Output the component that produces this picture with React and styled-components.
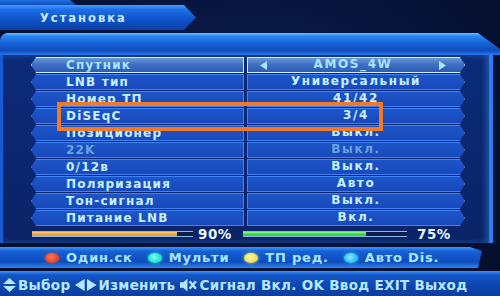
import styled, { createGlobalStyle } from 'styled-components';

const GlobalStyle = createGlobalStyle`
  html, body {
    margin: 0;
    padding: 0;
    background: #06112e;
  }
  * {
    box-sizing: border-box;
  }
`;

const rows = [
  { label: 'Спутник', value: 'AMOS_4W', selected: true },
  { label: 'LNB тип', value: 'Универсальный' },
  { label: 'Номер ТП', value: '41/42' },
  { label: 'DiSEqC', value: '3/4' },
  { label: 'Позиционер', value: 'Выкл.' },
  { label: '22K', value: 'Выкл.', dim: true },
  { label: '0/12в', value: 'Выкл.' },
  { label: 'Поляризация', value: 'Авто' },
  { label: 'Тон-сигнал', value: 'Выкл.' },
  { label: 'Питание LNB', value: 'Вкл.' },
];

const legend = [
  { color: '#e5482e', glow: '#ff7a50', text: 'Один.ск' },
  { color: '#22e2cf', glow: '#7affee', text: 'Мульти' },
  { color: '#e6e05a', glow: '#fff7a0', text: 'ТП ред.' },
  { color: '#2ec4f4', glow: '#8ae6ff', text: 'Авто Dis.' },
];

const Arrow = ({ dir, size = 9 }) => (
  <svg width={size * 0.8} height={size} viewBox="0 0 8 10">
    {dir === 'left' ? <polygon points="8,0 8,10 0,5" fill="currentColor" /> : <polygon points="0,0 0,10 8,5" fill="currentColor" />}
  </svg>
);

const UpDown = () => (
  <svg width="13" height="14" viewBox="0 0 12 13">
    <polygon points="6,0 12,5.5 0,5.5" fill="currentColor" />
    <polygon points="0,7.5 12,7.5 6,13" fill="currentColor" />
  </svg>
);

const Mute = () => (
  <svg width="17" height="14" viewBox="0 0 16 13">
    <polygon points="0,4 3,4 7,0.5 7,12.5 3,9 0,9" fill="currentColor" />
    <path d="M9 3 L15 10 M15 3 L9 10" stroke="currentColor" strokeWidth="2.2" />
  </svg>
);

export default function App() {
  return (
    <Screen>
      <GlobalStyle />
      <TitleArea>
        <TopStripe />
        <TitleTab>Установка</TitleTab>
      </TitleArea>
      <HeaderBand />
      <Body>
        <RowList>
          {rows.map((r) => (
            <Row key={r.label}>
              <LabelCell $selected={r.selected} $dim={r.dim}>{r.label}</LabelCell>
              <ValueCell $selected={r.selected} $dim={r.dim}>
                {r.selected && <Arrow dir="left" />}
                <ValueText>{r.value}</ValueText>
                {r.selected && <Arrow dir="right" />}
              </ValueCell>
            </Row>
          ))}
        </RowList>
        <MeterRow>
          <Meter $w={161}>
            <MeterFill $color="#f0a235" $edge="#ffd080" style={{ width: '90%' }} />
          </Meter>
          <Percent $w={50}>90%</Percent>
          <Meter $w={164}>
            <MeterFill $color="#34d64a" $edge="#9cff9c" style={{ width: '75%' }} />
          </Meter>
          <Percent>75%</Percent>
        </MeterRow>
      </Body>
      <LegendBand>
        {legend.map((l) => (
          <LegendItem key={l.text}>
            <Dot $color={l.color} $glow={l.glow} />
            {l.text}
          </LegendItem>
        ))}
      </LegendBand>
      <HelpBand>
        <HelpItem><UpDown />Выбор</HelpItem>
        <HelpItem><Arrow dir="left" size={12} /><Arrow dir="right" size={12} />Изменить</HelpItem>
        <HelpItem><Mute />Сигнал Вкл.</HelpItem>
        <HelpItem>OK Ввод</HelpItem>
        <HelpItem>EXIT Выход</HelpItem>
      </HelpBand>
      <Highlight />
    </Screen>
  );
}

const Screen = styled.div`
  position: relative;
  width: 500px;
  height: 296px;
  overflow: hidden;
  background: radial-gradient(ellipse at 50% 40%, #0c1d52 0%, #07143a 60%, #050d28 100%);
  font-family: "DejaVu Sans", Verdana, sans-serif;
  font-weight: bold;
  color: #c6effc;
`;

const TitleArea = styled.div`
  height: 31px;
  display: flex;
  flex-direction: column;
`;

const TopStripe = styled.div`
  width: 76px;
  height: 5px;
  background: linear-gradient(to bottom, #1f6fe0, #0f49b8);
  clip-path: polygon(0 0, 70px 0, 76px 100%, 0 100%);
`;

const TitleTab = styled.div`
  width: 196px;
  height: 25px;
  padding-left: 40px;
  display: flex;
  align-items: center;
  font-size: 11.5px;
  letter-spacing: 2px;
  color: #c4ecff;
  background: linear-gradient(to bottom, #4a9cff 0%, #1d6fe8 18%, #0f52c8 60%, #0b3fa4 100%);
  clip-path: polygon(0 0, 184px 0, 196px 50%, 184px 100%, 0 100%);
`;

const HeaderBand = styled.div`
  margin-top: 2px;
  width: 500px;
  height: 22px;
  background: linear-gradient(to bottom, #6cc0ff 0%, #2a86f4 14%, #1664d8 45%, #0f4cbc 80%, #2a78ee 100%);
  border-radius: 8px 0 0 0;
  clip-path: polygon(0 0, 478px 0, 500px 16px, 500px 100%, 0 100%);
`;

const Body = styled.div`
  width: 493px;
  height: 188px;
  padding: 2px 0 0 28px;
  background: linear-gradient(to bottom, #0b2a78, #0a2466);
  border-right: 4px solid #2a7ff0;
  border-left: 3px solid #1a5ad0;
  box-shadow: inset -3px 0 6px rgba(80, 160, 255, 0.35);
`;

const RowList = styled.div`
  display: flex;
  flex-direction: column;
  gap: 2px;
`;

const Row = styled.div`
  display: grid;
  grid-template-columns: 213px 218px;
  column-gap: 3px;
  height: 15px;
`;

const cellFill = (p) =>
  p.$selected
    ? 'linear-gradient(to bottom, #6a9ad8, #3f70c4 45%, #2d5cb4)'
    : 'linear-gradient(to bottom, #1d55c8, #1849bc)';

const LabelCell = styled.div`
  display: flex;
  align-items: center;
  padding-left: 34px;
  font-size: 12px;
  letter-spacing: 1.2px;
  color: ${(p) => (p.$dim ? '#6aa2de' : p.$selected ? '#a6e6ff' : '#c9f0fd')};
  background: ${cellFill};
  border: 1px solid ${(p) => (p.$selected ? '#d8ecff' : '#3f82f6')};
  clip-path: polygon(5px 0, 100% 0, 100% 100%, 5px 100%, 0 50%);
  white-space: nowrap;
`;

const ValueCell = styled.div`
  display: flex;
  align-items: center;
  justify-content: space-between;
  padding: 0 ${(p) => (p.$selected ? '18px' : '0')} 0 ${(p) => (p.$selected ? '12px' : '0')};
  font-size: 12px;
  letter-spacing: 1.6px;
  color: ${(p) => (p.$dim ? '#6aa2de' : p.$selected ? '#a6e6ff' : '#c9f0fd')};
  background: ${cellFill};
  border: 1px solid ${(p) => (p.$selected ? '#d8ecff' : '#3f82f6')};
  clip-path: polygon(0 0, calc(100% - 5px) 0, 100% 50%, calc(100% - 5px) 100%, 0 100%);
  white-space: nowrap;
`;

const ValueText = styled.span`
  flex: 1;
  text-align: center;
  line-height: 12px;
  padding-bottom: 2px;
`;

const MeterRow = styled.div`
  display: flex;
  align-items: center;
  height: 14px;
  margin-top: 2px;
  padding-left: 1px;
`;

const Meter = styled.div`
  width: ${(p) => p.$w}px;
  height: 6px;
  border-top: 1px solid #8fb4e6;
  border-bottom: 1px solid #8fb4e6;
  background: #0a1d4e;
  display: flex;
`;

const MeterFill = styled.div`
  height: 100%;
  background: linear-gradient(to bottom, ${(p) => p.$edge}, ${(p) => p.$color} 50%);
`;

const Percent = styled.div`
  width: ${(p) => (p.$w ? `${p.$w}px` : 'auto')};
  padding-left: ${(p) => (p.$w ? '5px' : '10px')};
  font-size: 13.5px;
  letter-spacing: 0.5px;
  color: #e4f6ff;
`;

const LegendBand = styled.div`
  margin-top: 4px;
  height: 21px;
  display: flex;
  align-items: center;
  padding-left: 45px;
  gap: 15px;
  background: linear-gradient(to bottom, #3d98ff 0%, #1660d6 20%, #0e4cbc 70%, #2d84f0 100%);
  clip-path: polygon(0 0, 470px 0, 482px 4px, 478px 100%, 0 100%);
`;

const LegendItem = styled.div`
  display: flex;
  align-items: center;
  gap: 7px;
  font-size: 13px;
  letter-spacing: 0.8px;
  color: #a8e6ff;
`;

const Dot = styled.span`
  width: 14px;
  height: 10px;
  border-radius: 50%;
  background: radial-gradient(circle at 45% 40%, ${(p) => p.$glow}, ${(p) => p.$color} 60%);
  box-shadow: 0 0 3px ${(p) => p.$color};
`;

const HelpBand = styled.div`
  margin-top: 3px;
  height: 27px;
  display: flex;
  align-items: center;
  gap: 5px;
  padding-left: 3px;
  background: linear-gradient(to bottom, #3d96ff 0%, #1356c8 14%, #0d44ac 60%, #0b3c9c 100%);
`;

const HelpItem = styled.div`
  display: flex;
  align-items: center;
  gap: 2px;
  font-size: 13.5px;
  letter-spacing: 0.3px;
  color: #b6e8ff;
  white-space: nowrap;
`;

const Highlight = styled.div`
  position: absolute;
  left: 57px;
  top: 102px;
  width: 326px;
  height: 29px;
  border: 4px solid #f27a26;
  pointer-events: none;
`;
